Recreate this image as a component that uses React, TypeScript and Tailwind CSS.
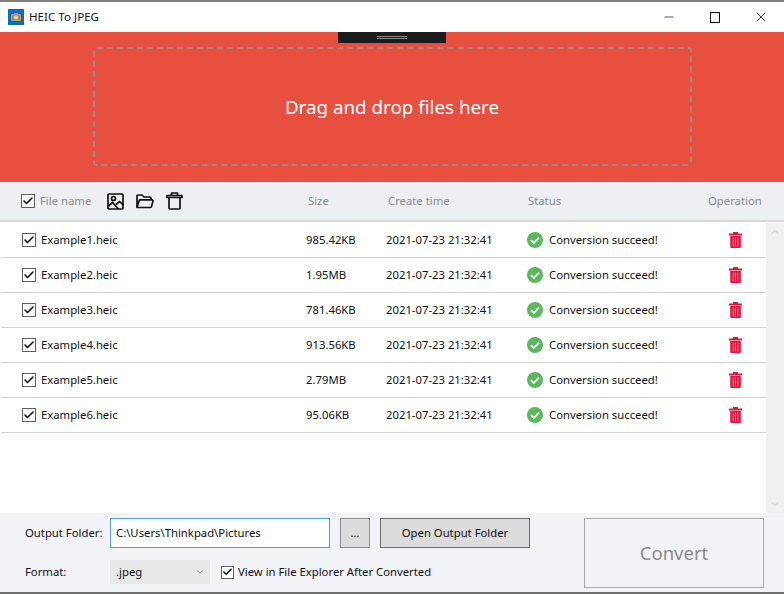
import { Check, ChevronDown, ChevronUp, Minus, X } from "lucide-react";

const files = [
  { name: "Example1.heic", size: "985.42KB" },
  { name: "Example2.heic", size: "1.95MB" },
  { name: "Example3.heic", size: "781.46KB" },
  { name: "Example4.heic", size: "913.56KB" },
  { name: "Example5.heic", size: "2.79MB" },
  { name: "Example6.heic", size: "95.06KB" },
];

function CheckBox({ small }: { small?: boolean }) {
  return (
    <span
      className={`flex shrink-0 items-center justify-center border border-[#5f5f5f] bg-white ${small ? "h-[13px] w-[13px]" : "h-[14px] w-[14px]"}`}
    >
      <Check className="h-[12px] w-[12px] text-black" strokeWidth={3} />
    </span>
  );
}

function AppIcon() {
  return (
    <svg viewBox="0 0 16 16" className="ml-[8px] h-[16px] w-[16px]">
      <rect width="16" height="16" fill="#0f6cbd" />
      <rect x="3" y="5" width="10" height="7" rx="1" fill="#b8935a" />
      <rect x="6" y="4" width="4" height="1.5" fill="#b8935a" />
      <circle cx="8" cy="8.5" r="2" fill="#c9d3d8" />
    </svg>
  );
}

function BinIcon() {
  return (
    <svg viewBox="0 0 13 16" className="h-[16px] w-[13px]" fill="#e2173f">
      <rect x="4" y="0" width="5" height="2" />
      <rect x="0" y="1.5" width="13" height="2" />
      <path d="M1.2 4h10.6v11a1 1 0 0 1-1 1H2.2a1 1 0 0 1-1-1z" />
      <path d="M4.2 5.5v9M6.5 5.5v9M8.8 5.5v9" stroke="#f7a3b5" strokeWidth="0.7" />
    </svg>
  );
}

function OkIcon() {
  return (
    <svg viewBox="0 0 16 16" className="h-[16px] w-[16px]">
      <circle cx="8" cy="8" r="8" fill="#5cb85c" />
      <path d="M4 8.2l2.8 2.8L12 5.6" fill="none" stroke="#fff" strokeWidth="1.8" />
    </svg>
  );
}

function ImageIcon() {
  return (
    <svg viewBox="0 0 17 17" className="h-[17px] w-[17px]" fill="none" stroke="#111" strokeWidth="1.7">
      <rect x="1" y="1" width="15" height="15" rx="1" />
      <circle cx="6.5" cy="5.5" r="2" />
      <path d="M1.5 13l4-3.5 6 6.5M9 11.5l3.5-3 4 3.5" />
    </svg>
  );
}

function FolderIcon() {
  return (
    <svg viewBox="0 0 18 15" className="h-[15px] w-[18px]" fill="none" stroke="#111" strokeWidth="1.7" strokeLinejoin="round">
      <path d="M1 13V2a1 1 0 0 1 1-1h4l2 2h6a1 1 0 0 1 1 1v2" />
      <path d="M1 13.5l2.2-7a1 1 0 0 1 1-.6H16a1 1 0 0 1 1 1.2l-1.6 5.7a1 1 0 0 1-1 .7z" />
    </svg>
  );
}

function TrashIcon() {
  return (
    <svg viewBox="0 0 17 18" className="h-[18px] w-[17px]" fill="none" stroke="#111" strokeWidth="1.7" strokeLinejoin="round">
      <path d="M5.5 3V1h6v2" />
      <path d="M1 3.5h15v2H1z" />
      <path d="M3 6v10a1 1 0 0 0 1 1h9a1 1 0 0 0 1-1V6" />
    </svg>
  );
}

export default function App() {
  return (
    <div className="flex h-[594px] w-[784px] flex-col overflow-hidden bg-white font-['Noto_Sans','Open_Sans',sans-serif] text-[11.3px] text-[#111]">
      <div className="h-[2px] bg-[#7f7f7f]" />

      <div className="flex h-[30px] items-center bg-white">
        <AppIcon />
        <span className="ml-[5px] text-[11.6px]">HEIC To JPEG</span>
        <div className="ml-auto flex">
          <div className="flex h-[30px] w-[46px] items-center justify-center">
            <Minus className="h-[14px] w-[14px]" strokeWidth={1.2} />
          </div>
          <div className="flex h-[30px] w-[46px] items-center justify-center">
            <div className="h-[11px] w-[10px] border border-[#111]" />
          </div>
          <div className="flex h-[30px] w-[46px] items-center justify-center">
            <X className="h-[16px] w-[16px]" strokeWidth={1.2} />
          </div>
        </div>
      </div>

      <div className="relative flex h-[150px] flex-col items-center bg-[#e74f3f] pt-[15px]">
        <div className="absolute left-[338px] top-0 flex h-[11px] w-[108px] items-center justify-center bg-[#1c1c1c]">
          <span className="h-[3px] w-[30px] border-y border-[#8a8a8a]" />
        </div>
        <div className="flex h-[119px] w-[599px] items-center justify-center rounded-[4px] border-2 border-dashed border-[#a5847e] pt-[2px] text-[18.8px] text-white">
          Drag and drop files here
        </div>
      </div>

      <div className="flex h-[40px] items-center border-b-2 border-[#d8d8d8] bg-[#eeeff3] text-[#8b8b8b]">
        <div className="flex w-[306px] items-center pl-[21px]">
          <CheckBox />
          <span className="ml-[5px] w-[61px]">File name</span>
          <div className="ml-[6px] flex items-center gap-[12px] text-[#111]">
            <ImageIcon />
            <FolderIcon />
            <TrashIcon />
          </div>
        </div>
        <span className="ml-[2px] w-[80px]">Size</span>
        <span className="w-[140px]">Create time</span>
        <span className="w-[180px]">Status</span>
        <span>Operation</span>
      </div>

      <div className="flex h-[291px] pt-[1px]">
        <div className="w-[766px]">
          {files.map((file) => (
            <div
              key={file.name}
              className="ml-[1px] flex h-[35px] items-center border-b border-[#d2d2d2]"
            >
              <div className="flex w-[305px] items-center pl-[21px]">
                <CheckBox />
                <span className="ml-[5px]">{file.name}</span>
              </div>
              <span className="w-[80px]">{file.size}</span>
              <span className="w-[141px]">2021-07-23 21:32:41</span>
              <div className="flex w-[202px] items-center gap-[6px]">
                <OkIcon />
                <span>Conversion succeed!</span>
              </div>
              <BinIcon />
            </div>
          ))}
        </div>
        <div className="flex w-[18px] flex-col items-center justify-between bg-[#f0f0f0] py-[3px] text-[#c8c8c8]">
          <ChevronUp className="h-[12px] w-[12px]" />
          <ChevronDown className="h-[12px] w-[12px]" />
        </div>
      </div>

      <div className="flex flex-1 border-b-2 border-[#6e6e6e] bg-[#f2f3f7] pl-[25px]">
        <div className="flex flex-col pt-[5px]">
          <div className="flex h-[30px] items-center">
            <span className="w-[85px] pt-[1px]">Output Folder:</span>
            <div className="flex h-[30px] w-[220px] items-center border border-[#5b9bd5] bg-white pl-[5px]">
              C:\Users\Thinkpad\Pictures
            </div>
            <button className="ml-[10px] h-[30px] w-[30px] border border-[#8e8e8e] bg-[#dcdcdc]">...</button>
            <button className="ml-[10px] h-[30px] w-[150px] border border-[#6e6e6e] bg-[#dcdcdc] pt-[1px]">
              Open Output Folder
            </button>
          </div>
          <div className="mt-[12px] flex h-[24px] items-center">
            <span className="w-[85px]">Format:</span>
            <div className="flex h-[24px] w-[100px] items-center justify-between bg-[#e8e8e8] pl-[6px] pr-[5px]">
              <span>.jpeg</span>
              <ChevronDown className="h-[10px] w-[10px] text-[#777]" />
            </div>
            <div className="ml-[11px] flex items-center gap-[4px]">
              <CheckBox small />
              <span>View in File Explorer After Converted</span>
            </div>
          </div>
        </div>
        <button className="ml-[54px] mt-[5px] h-[70px] w-[180px] border border-[#aaaaaa] text-[18.5px] text-[#8a8a8a]">
          Convert
        </button>
      </div>
    </div>
  );
}
